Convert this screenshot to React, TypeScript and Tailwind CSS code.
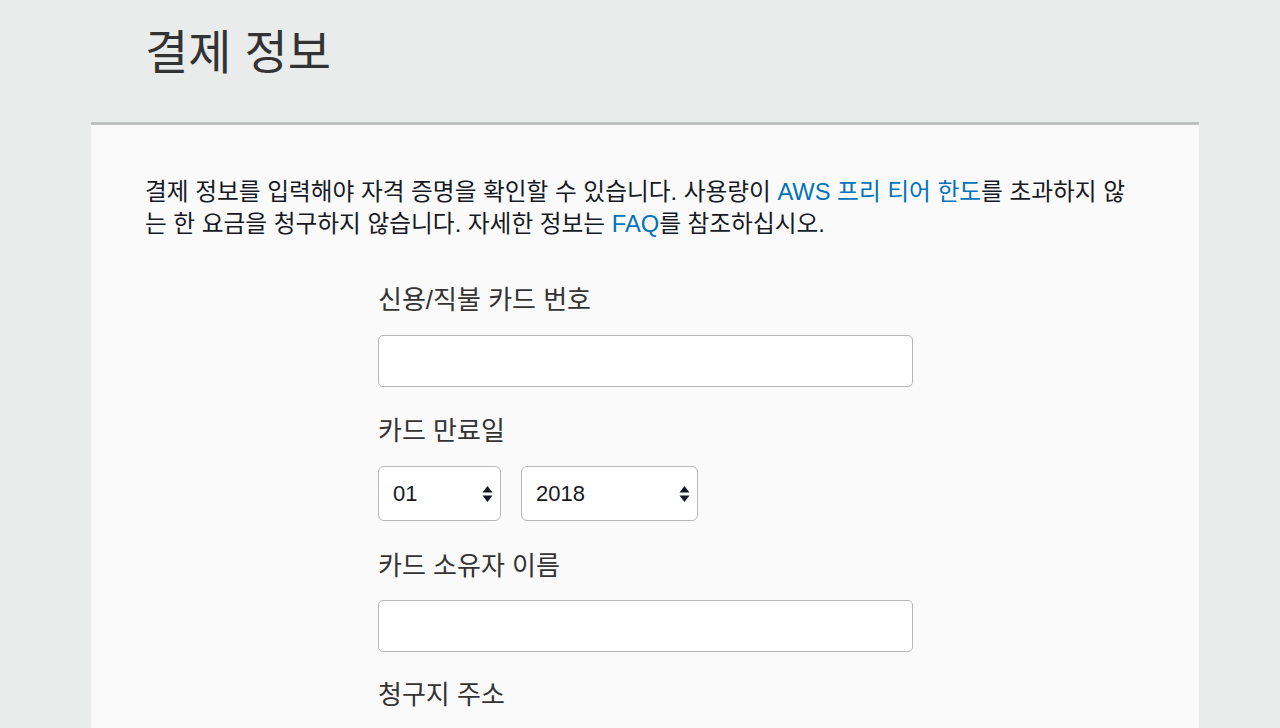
import React from 'react';

const font = { fontFamily: '"Liberation Sans", "Noto Sans CJK KR", sans-serif' };

const Arrows = () => (
  <svg width="11" height="18" viewBox="0 0 11 18" className="pointer-events-none absolute right-[8px] top-1/2 -translate-y-1/2">
    <path d="M5.5 1 L10.5 7.5 L0.5 7.5 Z" fill="#16191f" />
    <path d="M5.5 17 L10.5 10.5 L0.5 10.5 Z" fill="#16191f" />
  </svg>
);

const Select = ({ value, width, options }: { value: string; width: string; options: string[] }) => (
  <div className={`relative ${width}`}>
    <select
      defaultValue={value}
      className="h-[55px] w-full appearance-none rounded-[6px] border border-[#b4b7b8] bg-white pl-[14px] pr-8 text-[22px] text-[#16191f] outline-none"
    >
      {options.map((o) => (
        <option key={o} value={o}>{o}</option>
      ))}
    </select>
    <Arrows />
  </div>
);

const Label = ({ children, className = '' }: { children: React.ReactNode; className?: string }) => (
  <label className={`text-[26px] leading-[32px] text-[#333] ${className}`}>{children}</label>
);

export default function App() {
  const months = ['01', '02', '03', '04', '05', '06', '07', '08', '09', '10', '11', '12'];
  const years = ['2018', '2019', '2020', '2021', '2022', '2023', '2024', '2025'];

  return (
    <div className="min-h-[728px] bg-[#eaebeb] px-[91px] pr-[81px]" style={font}>
      <div className="h-[122px] pl-[54px] pt-[23px]">
        <h1 className="text-[47px] leading-[60px] font-normal text-[#333]">결제 정보</h1>
      </div>
      <div className="min-h-[606px] border-t-[3px] border-[#bfc0c0] bg-[#fafafa] px-[54px] pt-[51px]">
        <p className="w-[1000px] text-[23.7px] leading-[32px] text-[#16191f]">
          결제 정보를 입력해야 자격 증명을 확인할 수 있습니다. 사용량이{' '}
          <a className="text-[#0073bb]">AWS 프리 티어 한도</a>를 초과하지 않는 한 요금을 청구하지 않습니다. 자세한 정보는{' '}
          <a className="text-[#0073bb]">FAQ</a>를 참조하십시오.
        </p>

        <div className="ml-[233px] mt-[44px] flex w-[535px] flex-col">
          <Label>신용/직불 카드 번호</Label>
          <input className="mt-[19px] h-[52px] w-full rounded-[5px] border border-[#b4b7b8] bg-white px-3 text-[22px] outline-none" />

          <Label className="mt-[28px]">카드 만료일</Label>
          <div className="mt-[19px] flex gap-[20px]">
            <Select value="01" width="w-[123px]" options={months} />
            <Select value="2018" width="w-[177px]" options={years} />
          </div>

          <Label className="mt-[29px]">카드 소유자 이름</Label>
          <input className="mt-[18px] h-[52px] w-full rounded-[5px] border border-[#b4b7b8] bg-white px-3 text-[22px] outline-none" />

          <Label className="mt-[27px]">청구지 주소</Label>
        </div>
      </div>
    </div>
  );
}
